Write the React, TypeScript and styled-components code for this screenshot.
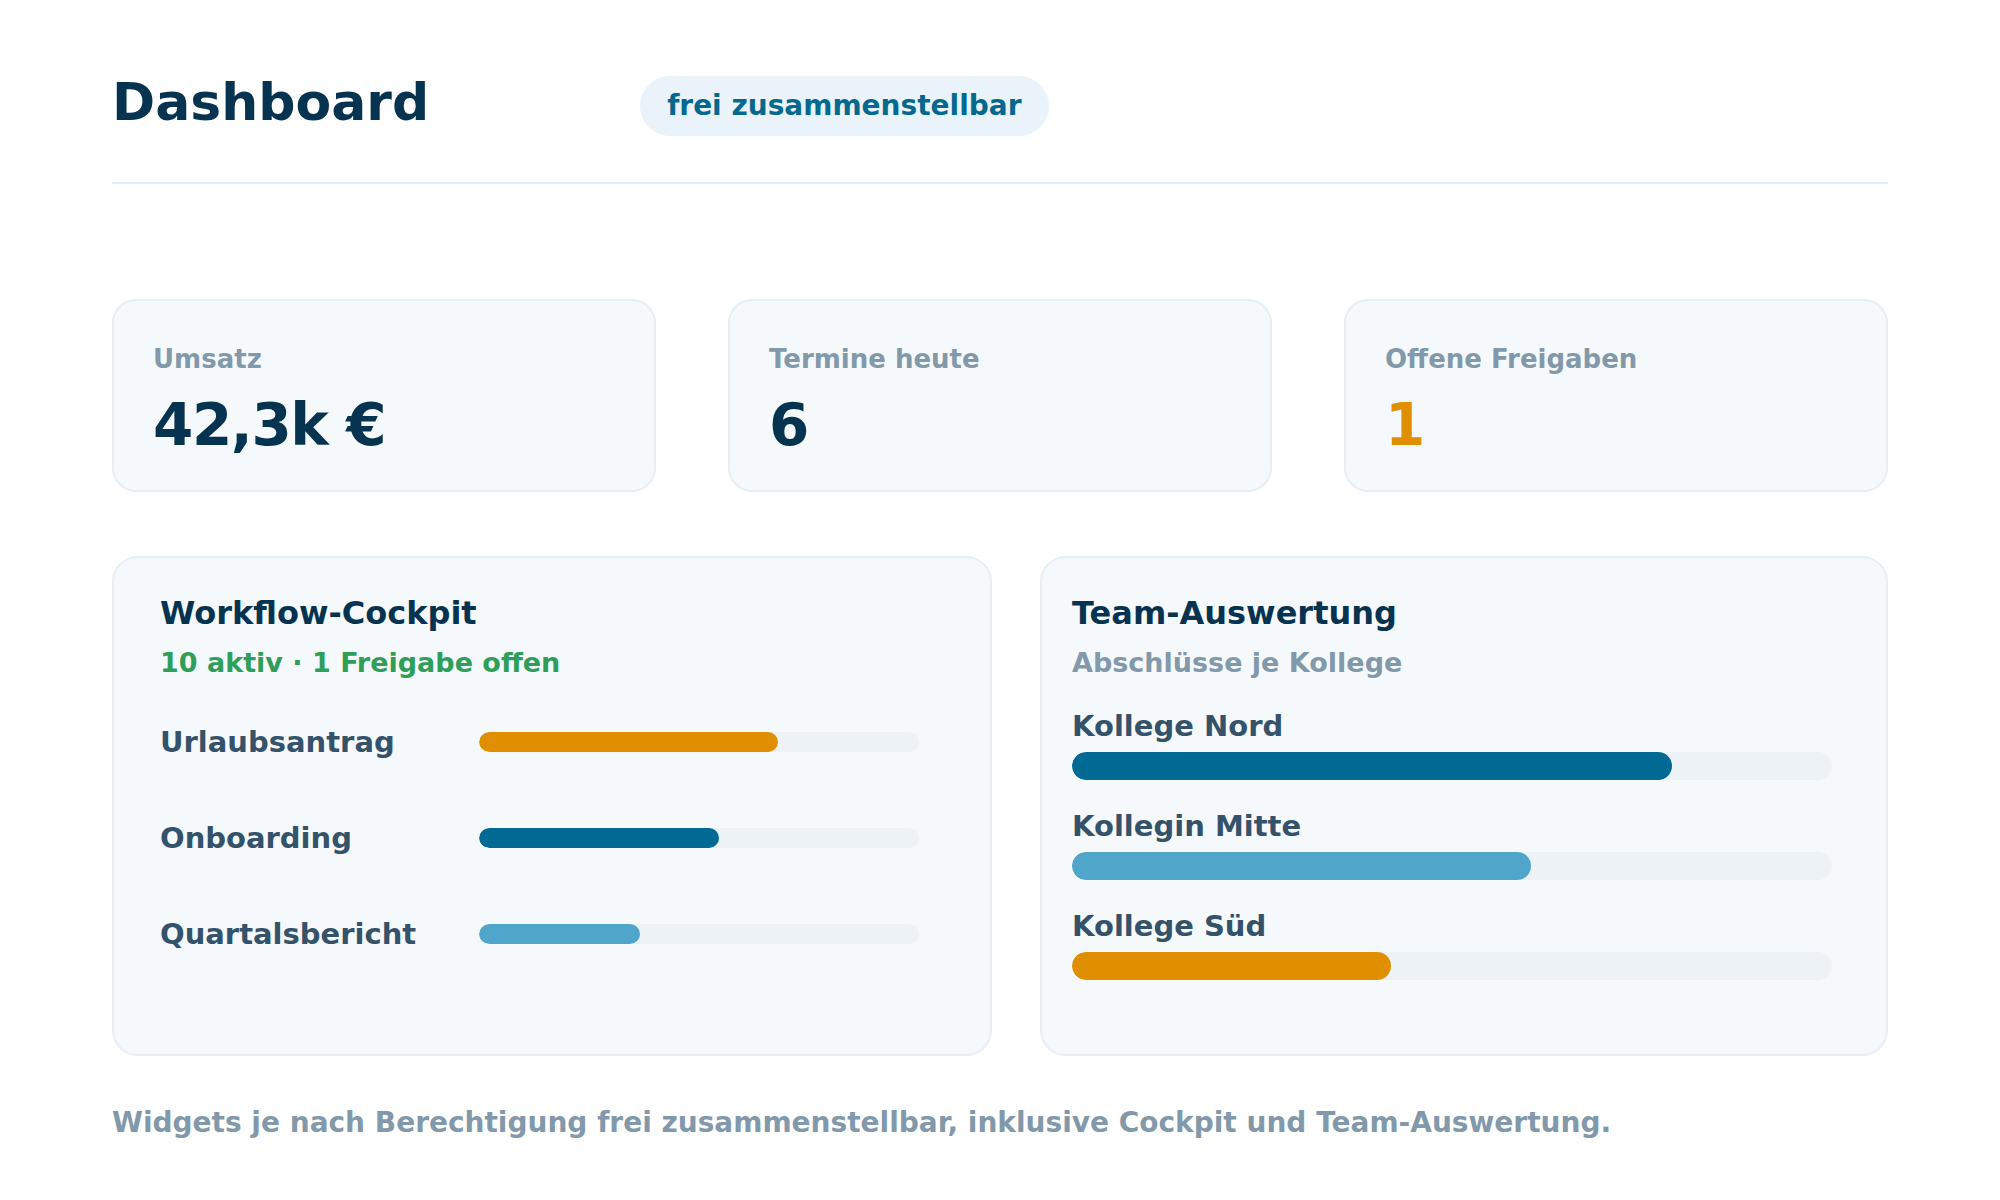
import React from "react";
import styled, { createGlobalStyle } from "styled-components";

const GlobalStyle = createGlobalStyle`
  html, body {
    margin: 0;
    padding: 0;
    background: #ffffff;
  }
  body {
    font-family: "DejaVu Sans", "Noto Sans", sans-serif;
    font-weight: 700;
    color: #0a3552;
  }
  * { box-sizing: border-box; }
`;

const Page = styled.div`
  width: 2000px;
  padding: 71px 112px 60px;
`;

const Header = styled.header`
  display: flex;
  align-items: flex-start;
  gap: 211px;
  padding-bottom: 46px;
  border-bottom: 2px solid #e6eef5;
`;

const Title = styled.h1`
  margin: 0;
  font-size: 52px;
  line-height: 62px;
  font-weight: 700;
  color: #06334f;
`;

const Badge = styled.span`
  margin-top: 5px;
  height: 60px;
  line-height: 60px;
  padding: 0 27px;
  border-radius: 30px;
  background: #eaf3fa;
  color: #05698f;
  font-size: 28px;
  font-weight: 700;
  white-space: nowrap;
`;

const Stats = styled.section`
  margin-top: 115px;
  display: grid;
  grid-template-columns: repeat(3, 1fr);
  gap: 72px;
`;

const StatCard = styled.div`
  background: #f6f9fc;
  border: 2px solid #e7eef5;
  border-radius: 24px;
  padding: 43px 39px 31px;
  height: 193px;
  display: flex;
  flex-direction: column;
  gap: 18px;
`;

const StatLabel = styled.div`
  font-size: 26px;
  line-height: 31px;
  color: #8199aa;
`;

const StatValue = styled.div<{ $accent?: boolean }>`
  font-size: 58px;
  line-height: 64px;
  letter-spacing: -0.025em;
  color: ${(p) => (p.$accent ? "#e08f00" : "#06334f")};
`;

const Panels = styled.section`
  margin-top: 64px;
  display: grid;
  grid-template-columns: 880px 1fr;
  gap: 48px;
`;

const Panel = styled.div<{ $pl: number; $pr: number }>`
  background: #f6f9fc;
  border: 2px solid #e7eef5;
  border-radius: 26px;
  min-height: 500px;
  padding: 36px ${(p) => p.$pr}px 40px ${(p) => p.$pl}px;
`;

const PanelTitle = styled.h2`
  margin: 0;
  font-size: 32px;
  line-height: 38px;
  font-weight: 700;
  color: #06334f;
`;

const PanelSub = styled.div<{ $tone: "green" | "gray" }>`
  margin-top: 15px;
  font-size: 27px;
  line-height: 32px;
  color: ${(p) => (p.$tone === "green" ? "#2f9e58" : "#8199aa")};
`;

const FlowList = styled.div`
  margin-top: 39px;
  display: flex;
  flex-direction: column;
  gap: 48px;
`;

const FlowRow = styled.div`
  display: flex;
  align-items: center;
  height: 48px;
`;

const RowLabel = styled.div`
  font-size: 29px;
  line-height: 34px;
  color: #34526a;
`;

const FlowLabel = styled(RowLabel)`
  width: 319px;
  flex: none;
`;

const Track = styled.div<{ $h: number; $w?: number }>`
  width: ${(p) => (p.$w ? `${p.$w}px` : "100%")};
  height: ${(p) => p.$h}px;
  border-radius: ${(p) => p.$h / 2}px;
  background: #edf2f6;
  overflow: hidden;
  flex: none;
`;

const Fill = styled.div<{ $color: string }>`
  height: 100%;
  border-radius: inherit;
  background: ${(p) => p.$color};
`;

const TeamList = styled.div`
  margin-top: 30px;
  display: flex;
  flex-direction: column;
  gap: 29px;
`;

const TeamItem = styled.div`
  display: flex;
  flex-direction: column;
  gap: 9px;
`;

const Footer = styled.p`
  margin: 50px 0 0;
  font-size: 28px;
  line-height: 33px;
  color: #8199aa;
`;

const ORANGE = "#e08f00";
const DARK = "#006a94";
const LIGHT = "#50a5cb";

const flows = [
  { label: "Urlaubsantrag", pct: 68, color: ORANGE },
  { label: "Onboarding", pct: 54.5, color: DARK },
  { label: "Quartalsbericht", pct: 36.5, color: LIGHT },
];

const team = [
  { label: "Kollege Nord", pct: 79, color: DARK },
  { label: "Kollegin Mitte", pct: 60.4, color: LIGHT },
  { label: "Kollege Süd", pct: 42, color: ORANGE },
];

export default function App() {
  return (
    <>
      <GlobalStyle />
      <Page>
        <Header>
          <Title>Dashboard</Title>
          <Badge>frei zusammenstellbar</Badge>
        </Header>

        <Stats>
          <StatCard>
            <StatLabel>Umsatz</StatLabel>
            <StatValue>42,3k €</StatValue>
          </StatCard>
          <StatCard>
            <StatLabel>Termine heute</StatLabel>
            <StatValue>6</StatValue>
          </StatCard>
          <StatCard>
            <StatLabel>Offene Freigaben</StatLabel>
            <StatValue $accent>1</StatValue>
          </StatCard>
        </Stats>

        <Panels>
          <Panel $pl={46} $pr={48}>
            <PanelTitle>Workflow-Cockpit</PanelTitle>
            <PanelSub $tone="green">10 aktiv · 1 Freigabe offen</PanelSub>
            <FlowList>
              {flows.map((f) => (
                <FlowRow key={f.label}>
                  <FlowLabel>{f.label}</FlowLabel>
                  <Track $h={20} $w={440}>
                    <Fill $color={f.color} style={{ width: `${f.pct}%` }} />
                  </Track>
                </FlowRow>
              ))}
            </FlowList>
          </Panel>

          <Panel $pl={30} $pr={54}>
            <PanelTitle>Team-Auswertung</PanelTitle>
            <PanelSub $tone="gray">Abschlüsse je Kollege</PanelSub>
            <TeamList>
              {team.map((t) => (
                <TeamItem key={t.label}>
                  <RowLabel>{t.label}</RowLabel>
                  <Track $h={28}>
                    <Fill $color={t.color} style={{ width: `${t.pct}%` }} />
                  </Track>
                </TeamItem>
              ))}
            </TeamList>
          </Panel>
        </Panels>

        <Footer>
          Widgets je nach Berechtigung frei zusammenstellbar, inklusive Cockpit und Team-Auswertung.
        </Footer>
      </Page>
    </>
  );
}
